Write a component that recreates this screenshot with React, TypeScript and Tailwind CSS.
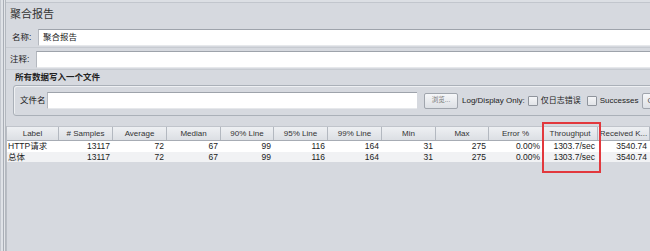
import React from "react";

const FONT = { fontFamily: '"Liberation Sans", "Noto Sans CJK SC", sans-serif' };

const cols = [
  { name: "Label", w: 52 },
  { name: "# Samples", w: 54 },
  { name: "Average", w: 54 },
  { name: "Median", w: 54 },
  { name: "90% Line", w: 53 },
  { name: "95% Line", w: 54 },
  { name: "99% Line", w: 54 },
  { name: "Min", w: 54 },
  { name: "Max", w: 53 },
  { name: "Error %", w: 54 },
  { name: "Throughput", w: 55 },
  { name: "Received K...", w: 52 },
];

const rows = [
  ["HTTP请求", "13117", "72", "67", "99", "116", "164", "31", "275", "0.00%", "1303.7/sec", "3540.74"],
  ["总体", "13117", "72", "67", "99", "116", "164", "31", "275", "0.00%", "1303.7/sec", "3540.74"],
];

function TextField({ className = "" }: { className?: string }) {
  return (
    <div
      className={
        "h-[17px] bg-white border-t border-l border-t-[#9ea3ab] border-l-[#b4b8bf] border-b border-b-[#e6e8eb] " +
        className
      }
    />
  );
}

function CheckBox() {
  return (
    <div className="w-[10px] h-[10px] shrink-0 bg-gradient-to-b from-[#f4f5f7] to-[#e2e4e8] border border-[#8f949c] rounded-[1px]" />
  );
}

export default function App() {
  return (
    <div
      className="w-[650px] h-[251px] overflow-hidden relative bg-[#d6d9df] text-[#222] flex flex-row"
      style={FONT}
    >
      {/* left splitter strip */}
      <div className="w-[6px] h-full flex flex-row shrink-0">
        <div className="w-[1px] h-full bg-[#c4c8cf]" />
        <div className="w-[2px] h-full bg-[#dfe2e7]" />
        <div className="w-[1px] h-full bg-[#a9aeb6]" />
        <div className="w-[1px] h-full bg-[#e3e5e9]" />
        <div className="w-[1px] h-full bg-[#b3b8bf]" />
      </div>

      <div className="flex-1 flex flex-col min-w-0">
        {/* top border */}
        <div className="h-[3px] border-b border-[#c2c6cd] bg-[#dcdfe4] shrink-0" />

        {/* title */}
        <div className="h-[23px] flex items-center pl-[4px] shrink-0">
          <span className="text-[11px] leading-none text-[#333]">聚合报告</span>
        </div>

        {/* name row */}
        <div className="h-[20px] mt-[2px] flex items-center shrink-0 border-b border-[#c7cbd1]">
          <span className="text-[8.5px] leading-none ml-[6px] w-[26px] shrink-0 whitespace-nowrap">名称:</span>
          <div className="flex-1 h-[17px] bg-white border-t border-l border-t-[#9ea3ab] border-l-[#b4b8bf] border-b border-b-[#e6e8eb] flex items-center pl-[4px]">
            <span className="text-[8.5px] leading-none whitespace-nowrap">聚合报告</span>
          </div>
        </div>

        {/* comment row */}
        <div className="h-[21px] mt-[1px] flex items-center shrink-0 border-b border-[#c7cbd1]">
          <span className="text-[8.5px] leading-none ml-[4px] w-[26px] shrink-0 whitespace-nowrap">注释:</span>
          <TextField className="flex-1" />
        </div>

        {/* group title */}
        <div className="h-[15px] flex items-center pl-[9px] shrink-0">
          <span className="text-[8.5px] leading-none font-bold whitespace-nowrap">所有数据写入一个文件</span>
        </div>

        {/* group box */}
        <div className="ml-[7px] w-[660px] h-[31px] border border-[#aab0b8] rounded-[3px] flex items-center shrink-0 shadow-[inset_1px_1px_0_#eef0f3] whitespace-nowrap">
          <span className="text-[8.5px] leading-none ml-[6px] w-[27px] shrink-0">文件名</span>
          <TextField className="w-[370px] shrink-0" />
          <div className="ml-[7px] w-[34px] h-[16px] shrink-0 rounded-[2px] border border-[#a0a5ad] bg-gradient-to-b from-[#f6f7f9] to-[#dde0e5] flex items-center justify-center">
            <span className="text-[6.5px] leading-none text-[#777]">浏览...</span>
          </div>
          <span className="ml-[4px] text-[8px] leading-none shrink-0">Log/Display Only:</span>
          <div className="ml-[3px]">
            <CheckBox />
          </div>
          <span className="ml-[3px] text-[8px] leading-none shrink-0">仅日志错误</span>
          <div className="ml-[6px]">
            <CheckBox />
          </div>
          <span className="ml-[3px] text-[8px] leading-none shrink-0">Successes</span>
          <div className="ml-[4px] w-[30px] h-[16px] shrink-0 rounded-[2px] border border-[#a0a5ad] bg-gradient-to-b from-[#f6f7f9] to-[#dde0e5] flex items-center pl-[4px]">
            <span className="text-[8px] leading-none text-[#555]">C</span>
          </div>
        </div>

        {/* table */}
        <div className="mt-[10px] flex-1 flex flex-col border-l border-[#b9bdc4]">
          <div className="flex flex-row h-[15px] border-t border-b border-t-[#c0c4cb] border-b-[#a7acb4] bg-gradient-to-b from-[#eef0f3] to-[#dcdfe4] shrink-0">
            {cols.map((c) => (
              <div
                key={c.name}
                className="h-full flex items-center justify-center border-r border-[#b3b8c0] shrink-0"
                style={{ width: c.w }}
              >
                <span className="text-[8px] leading-none text-[#333] whitespace-nowrap">{c.name}</span>
              </div>
            ))}
          </div>
          {rows.map((r, ri) => (
            <div
              key={ri}
              className={"flex flex-row h-[10.5px] shrink-0 " + (ri === 0 ? "bg-white" : "bg-[#f1f2f4]")}
            >
              {r.map((v, ci) => (
                <div
                  key={ci}
                  className={
                    "h-full flex items-center shrink-0 " +
                    (ci === 0 ? "justify-start pl-[1px]" : "justify-end pr-[3px]")
                  }
                  style={{ width: cols[ci].w }}
                >
                  <span className="text-[8.5px] leading-none whitespace-nowrap">{v}</span>
                </div>
              ))}
            </div>
          ))}
        </div>
      </div>

      {/* red highlight box */}
      <div className="absolute left-[542px] top-[122px] w-[59px] h-[51px] border-2 border-[#e2383d] pointer-events-none" />
    </div>
  );
}
